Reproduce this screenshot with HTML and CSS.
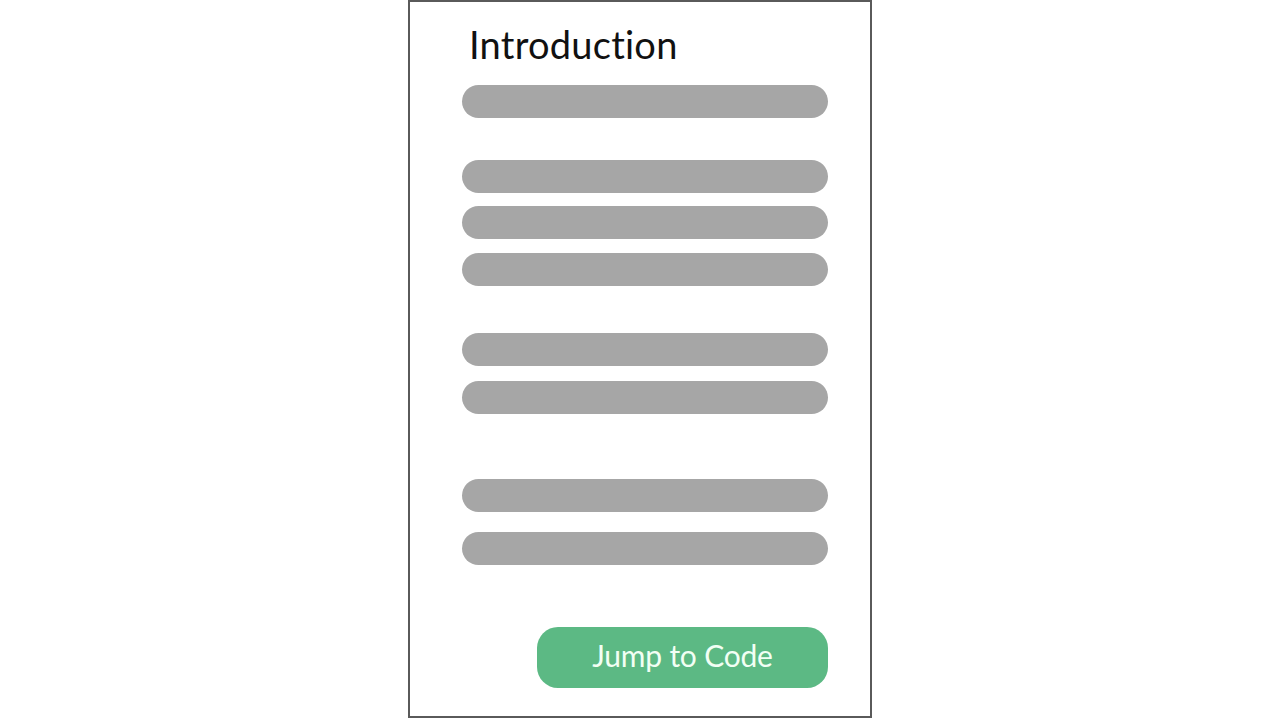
FILE: index.html
```html
<!DOCTYPE html>
<html lang="en">
<head>
<meta charset="utf-8">
<title>Introduction</title>
<link rel="stylesheet" href="styles.css">
</head>
<body>
  <main class="card">
    <h1 class="title">Introduction</h1>
    <div class="group group-1">
      <div class="bar"></div>
    </div>
    <div class="group group-2">
      <div class="bar"></div>
      <div class="bar"></div>
      <div class="bar"></div>
    </div>
    <div class="group group-3">
      <div class="bar"></div>
      <div class="bar"></div>
    </div>
    <div class="group group-4">
      <div class="bar"></div>
      <div class="bar"></div>
    </div>
    <div class="actions">
      <button class="jump">Jump to Code</button>
    </div>
  </main>
</body>
</html>
```
FILE: styles.css
```css
html, body {
  margin: 0;
  padding: 0;
  background: #ffffff;
}
body {
  display: flex;
  justify-content: center;
  font-family: Lato, "Open Sans", sans-serif;
}
.card {
  box-sizing: border-box;
  width: 464px;
  height: 718px;
  border: 2px solid #5a5a5a;
  background: #fff;
  display: flex;
  flex-direction: column;
  padding: 0 42px 0 52px;
}
.title {
  margin: 19px 0 0 7px;
  font-size: 38px;
  line-height: 46px;
  font-weight: 400;
  color: #111;
  letter-spacing: 0.25px;
}
.group {
  display: flex;
  flex-direction: column;
}
.bar {
  height: 33px;
  border-radius: 17px;
  background: #a6a6a6;
}
.group-1 { margin-top: 18px; }
.group-2 { margin-top: 41.5px; gap: 13.5px; }
.group-3 { margin-top: 47px; gap: 15.5px; }
.group-4 { margin-top: 65px; gap: 19.5px; }
.actions {
  display: flex;
  justify-content: flex-end;
  margin-top: 62px;
}
.jump {
  width: 291px;
  height: 61px;
  border: none;
  border-radius: 21px;
  background: #5cb984;
  color: #f2fff4;
  font-family: Lato, "Open Sans", sans-serif;
  font-size: 30px;
  line-height: 1;
  padding: 0 0 4px;
  letter-spacing: -0.2px;
}
```
